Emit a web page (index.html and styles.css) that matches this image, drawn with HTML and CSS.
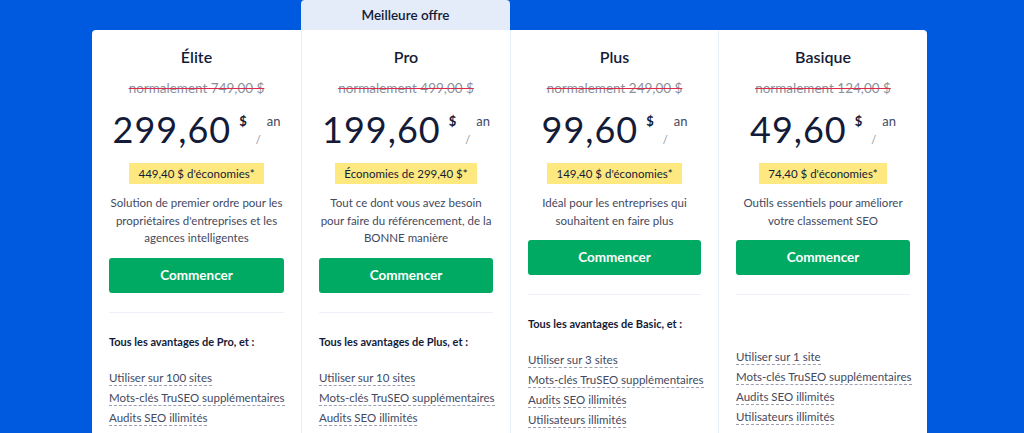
FILE: index.html
```html
<!DOCTYPE html>
<html lang="fr">
<head>
<meta charset="utf-8">
<title>Tarifs</title>
<link rel="stylesheet" href="styles.css">
</head>
<body>
<div class="plans">
  <div class="plan plan-first">
    <div class="tab"></div>
    <div class="body">
      <h3 class="title">Élite</h3>
      <div class="was">normalement 749,00 $</div>
      <div class="price"><span class="amount">299,60</span><span class="cur">$</span><span class="slash">/</span><span class="per">an</span></div>
      <div class="save"><span>449,40 $ d'économies*</span></div>
      <p class="desc">Solution de premier ordre pour les propriétaires d'entreprises et les agences intelligentes</p>
      <a class="btn">Commencer</a>
      <hr class="sep">
      <div class="lead">Tous les avantages de Pro, et :</div>
      <ul class="feats">
        <li><span>Utiliser sur 100 sites</span></li>
        <li><span>Mots-clés TruSEO supplémentaires</span></li>
        <li><span>Audits SEO illimités</span></li>
      </ul>
    </div>
  </div>
  <div class="plan plan-best">
    <div class="tab tab-best">Meilleure offre</div>
    <div class="body">
      <h3 class="title">Pro</h3>
      <div class="was">normalement 499,00 $</div>
      <div class="price"><span class="amount">199,60</span><span class="cur">$</span><span class="slash">/</span><span class="per">an</span></div>
      <div class="save"><span>Économies de 299,40 $*</span></div>
      <p class="desc">Tout ce dont vous avez besoin pour faire du référencement, de la BONNE manière</p>
      <a class="btn">Commencer</a>
      <hr class="sep">
      <div class="lead">Tous les avantages de Plus, et :</div>
      <ul class="feats">
        <li><span>Utiliser sur 10 sites</span></li>
        <li><span>Mots-clés TruSEO supplémentaires</span></li>
        <li><span>Audits SEO illimités</span></li>
      </ul>
    </div>
  </div>
  <div class="plan">
    <div class="tab"></div>
    <div class="body">
      <h3 class="title">Plus</h3>
      <div class="was">normalement 249,00 $</div>
      <div class="price"><span class="amount">99,60</span><span class="cur">$</span><span class="slash">/</span><span class="per">an</span></div>
      <div class="save"><span>149,40 $ d'économies*</span></div>
      <p class="desc">Idéal pour les entreprises qui souhaitent en faire plus</p>
      <a class="btn">Commencer</a>
      <hr class="sep">
      <div class="lead">Tous les avantages de Basic, et :</div>
      <ul class="feats">
        <li><span>Utiliser sur 3 sites</span></li>
        <li><span>Mots-clés TruSEO supplémentaires</span></li>
        <li><span>Audits SEO illimités</span></li>
        <li><span>Utilisateurs illimités</span></li>
      </ul>
    </div>
  </div>
  <div class="plan plan-last">
    <div class="tab"></div>
    <div class="body">
      <h3 class="title">Basique</h3>
      <div class="was">normalement 124,00 $</div>
      <div class="price"><span class="amount">49,60</span><span class="cur">$</span><span class="slash">/</span><span class="per">an</span></div>
      <div class="save"><span>74,40 $ d'économies*</span></div>
      <p class="desc">Outils essentiels pour améliorer votre classement SEO</p>
      <a class="btn">Commencer</a>
      <hr class="sep">
      <div class="lead lead-empty"></div>
      <ul class="feats">
        <li><span>Utiliser sur 1 site</span></li>
        <li><span>Mots-clés TruSEO supplémentaires</span></li>
        <li><span>Audits SEO illimités</span></li>
        <li><span>Utilisateurs illimités</span></li>
      </ul>
    </div>
  </div>
</div>
</body>
</html>
```

FILE: styles.css
```css
html, body {
  margin: 0;
  padding: 0;
}
body {
  background: #005ae0;
  font-family: Lato, "Liberation Sans", sans-serif;
  color: #434960;
  height: 433px;
  overflow: hidden;
}
.plans {
  display: grid;
  grid-template-columns: 209px 209px 208px 209px;
  margin-left: 92px;
  width: 835px;
  align-items: stretch;
}
.plan {
  display: flex;
  flex-direction: column;
}
.tab {
  height: 30px;
  flex: none;
}
.tab-best {
  background: #e4ecfa;
  border-radius: 4px 4px 0 0;
  color: #141b38;
  font-size: 13.5px;
  font-weight: 600;
  text-align: center;
  line-height: 30px;
}
.body {
  background: #fff;
  flex: 1;
  padding: 17px 17px 0;
  min-height: 420px;
  border-left: 1px solid #e8eef8;
}
.plan-first .body {
  border-left: none;
  border-radius: 4px 0 0 0;
}
.plan-last .body {
  border-radius: 0 4px 0 0;
}
.title {
  margin: 0;
  font-size: 16px;
  line-height: 20px;
  font-weight: 600;
  color: #141b38;
  text-align: center;
}
.was {
  margin-top: 12px;
  font-size: 13.5px;
  line-height: 18px;
  color: #8c8f9a;
  text-align: center;
  text-decoration: line-through;
  text-decoration-color: #df2a4a;
  text-decoration-thickness: 1px;
}
.price {
  display: flex;
  justify-content: center;
  align-items: flex-start;
  margin-top: 12px;
  height: 40px;
  color: #141b38;
}
.amount {
  font-size: 36px;
  line-height: 40px;
  font-weight: 400;
  letter-spacing: 1px;
}
.cur {
  font-size: 13px;
  font-weight: 700;
  line-height: 14px;
  margin-left: 8px;
  margin-top: 5px;
}
.slash {
  align-self: flex-end;
  font-size: 11px;
  color: #8c8f9a;
  margin-left: 9px;
  line-height: 14px;
  margin-bottom: 2px;
}
.per {
  font-size: 13px;
  color: #434960;
  margin-left: 6px;
  line-height: 14px;
  margin-top: 5px;
}
.save {
  margin-top: 13px;
  text-align: center;
  height: 21px;
}
.save span {
  display: inline-block;
  background: #fde97f;
  color: #141b38;
  font-size: 11.5px;
  line-height: 21px;
  padding: 0 9px;
}
.desc {
  margin: 11px 0 0;
  font-size: 11.5px;
  line-height: 17.5px;
  text-align: center;
  color: #434960;
}
.btn {
  display: block;
  margin-top: 11px;
  height: 35px;
  line-height: 35px;
  background: #00aa63;
  border-radius: 3px;
  color: #fff;
  font-size: 13.5px;
  font-weight: 700;
  text-align: center;
}
.sep {
  margin: 19px 0 0;
  border: none;
  border-top: 1px solid #eef2f8;
  height: 0;
}
.lead {
  margin-top: 22px;
  font-size: 11px;
  line-height: 14px;
  font-weight: 700;
  color: #141b38;
}
.lead-empty {
  height: 11px;
}
.feats {
  list-style: none;
  margin: 19px 0 0;
  padding: 0;
}
.feats li {
  font-size: 11.5px;
  line-height: 20px;
  height: 20px;
  white-space: nowrap;
}
.feats span {
  border-bottom: 1px dashed #9aa0ad;
  padding-bottom: 1px;
}
```
